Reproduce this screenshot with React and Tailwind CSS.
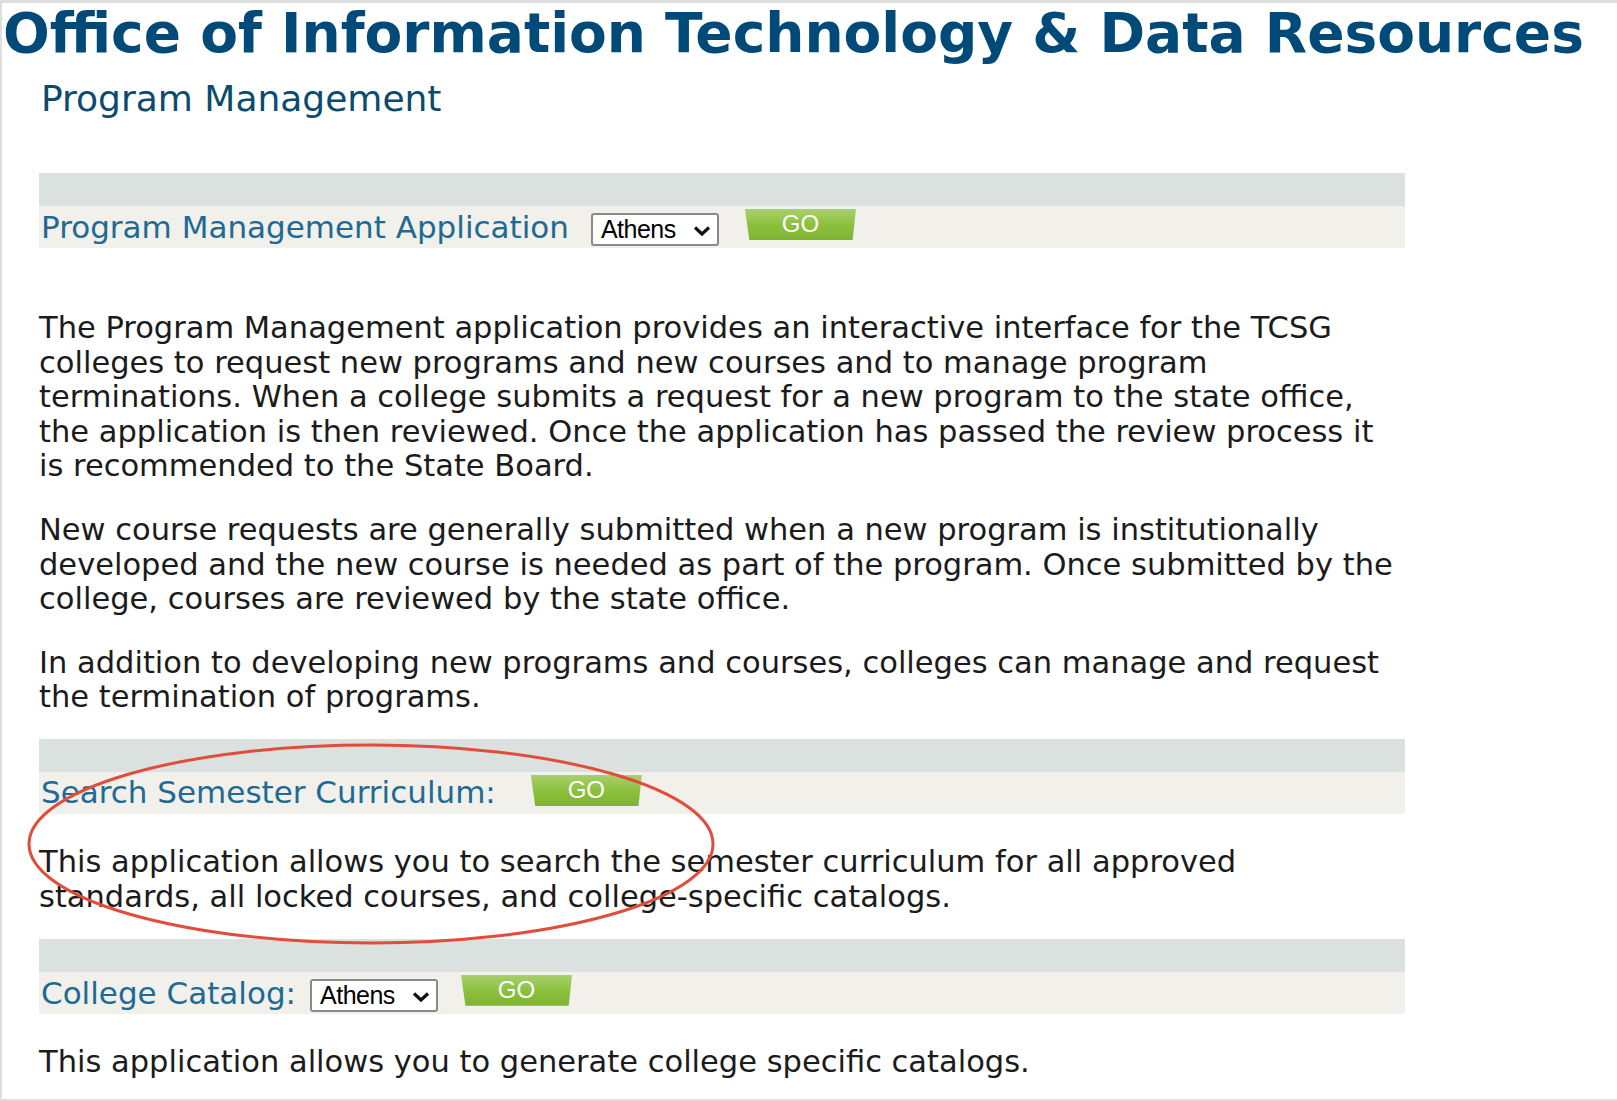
import React from "react";

const verdana = { fontFamily: '"DejaVu Sans", Verdana, sans-serif' };

function GoButton() {
  return (
    <button
      type="button"
      className="flex h-[31px] w-[111px] items-center justify-center bg-gradient-to-b from-[#a9d06c] via-[#8cc13c] to-[#7fb232] pb-[1px] text-[24px] leading-none text-white [clip-path:polygon(0_0,100%_0,97%_100%,4%_100%)]"
      style={{ fontFamily: '"Liberation Sans", Arial, sans-serif' }}
    >
      GO
    </button>
  );
}

function CampusSelect() {
  return (
    <div
      className="flex h-[33px] w-[128px] items-center justify-between rounded-[3px] border-2 border-[#8a8a8a] bg-white pl-[8px] pr-[6px] text-[25px] leading-none tracking-[-0.5px] text-black"
      style={{ fontFamily: '"Liberation Sans", Arial, sans-serif' }}
    >
      <span>Athens</span>
      <svg width="18" height="12" viewBox="0 0 18 12" className="mt-[2px]">
        <path d="M2 2.5 L9 9 L16 2.5" fill="none" stroke="#111" strokeWidth="3.2" />
      </svg>
    </div>
  );
}

function SectionBar({ children, className = "" }) {
  return (
    <div className={className}>
      <div className="h-[33px] bg-[#dbe1df]" />
      <div className="flex h-[42px] items-center bg-[#f1f0eb] pl-[2px]">{children}</div>
    </div>
  );
}

function Label({ children }) {
  return <span className="whitespace-nowrap text-[31px] leading-none text-[#1e6a94]">{children}</span>;
}

export default function App() {
  return (
    <div
      className="relative h-[1101px] w-[1617px] overflow-hidden border-b-2 border-l-2 border-t-[3px] border-[#dedede] bg-white"
      style={verdana}
    >
      <h1 className="whitespace-nowrap pl-[1px] pt-[1px] text-[55px] font-bold leading-[58px] text-[#004a7a]">
        Office of Information Technology &amp; Data Resources
      </h1>
      <h2 className="mt-[16px] pl-[39px] text-[36px] leading-[42px] text-[#0b4b6e]">Program Management</h2>

      <div className="ml-[37px] w-[1366px] text-[30.5px] leading-[34.6px] text-[#1b1b1b]">
        <SectionBar className="mt-[53px]">
          <Label>Program Management Application</Label>
          <div className="ml-[22px] mt-[5px]">
            <CampusSelect />
          </div>
          <div className="ml-[26px] -mt-[5px]">
            <GoButton />
          </div>
        </SectionBar>

        <div className="mt-[63px] whitespace-nowrap">
          <p>
            The Program Management application provides an interactive interface for the TCSG
            <br />
            colleges to request new programs and new courses and to manage program
            <br />
            terminations. When a college submits a request for a new program to the state office,
            <br />
            the application is then reviewed. Once the application has passed the review process it
            <br />
            is recommended to the State Board.
          </p>
          <p className="mt-[29px]">
            New course requests are generally submitted when a new program is institutionally
            <br />
            developed and the new course is needed as part of the program. Once submitted by the
            <br />
            college, courses are reviewed by the state office.
          </p>
          <p className="mt-[29px]">
            In addition to developing new programs and courses, colleges can manage and request
            <br />
            the termination of programs.
          </p>
        </div>

        <SectionBar className="mt-[24px]">
          <Label>Search Semester Curriculum:</Label>
          <div className="ml-[35px] -mt-[5px]">
            <GoButton />
          </div>
        </SectionBar>

        <p className="mt-[31px] whitespace-nowrap">
          This application allows you to search the semester curriculum for all approved
          <br />
          standards, all locked courses, and college-specific catalogs.
        </p>

        <SectionBar className="mt-[25px]">
          <Label>College Catalog:</Label>
          <div className="ml-[14px] mt-[5px]">
            <CampusSelect />
          </div>
          <div className="ml-[23px] -mt-[6px]">
            <GoButton />
          </div>
        </SectionBar>

        <p className="mt-[31px] whitespace-nowrap">This application allows you to generate college specific catalogs.</p>
      </div>

      <svg
        className="pointer-events-none absolute left-[24px] top-[739px]"
        width="690"
        height="205"
        viewBox="0 0 690 205"
      >
        <ellipse cx="345" cy="102" rx="342" ry="99" fill="none" stroke="#e24c3b" strokeWidth="3" />
      </svg>
    </div>
  );
}
